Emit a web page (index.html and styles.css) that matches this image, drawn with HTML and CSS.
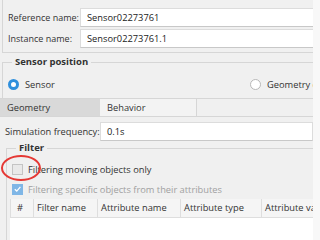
FILE: index.html
```html
<!DOCTYPE html>
<html lang="en">
<head>
  <meta charset="UTF-8" />
  <meta name="viewport" content="width=device-width, initial-scale=1.0" />
  <title>Sensor properties</title>
  <link rel="stylesheet" href="styles.css">
</head>
<body>
<div class="view">
  <div class="content">
    <!-- NAMING -->
    <fieldset class="group naming">
      <legend>Naming</legend>
      <div class="row"><label>Reference name:</label><div class="input">Sensor02273761</div></div>
      <div class="row"><label>Instance name:</label><div class="input">Sensor02273761.1</div></div>
    </fieldset>

    <!-- SENSOR POSITION -->
    <fieldset class="group position">
      <legend>Sensor position</legend>
      <div class="radios">
        <div class="ritem first"><span class="radio on"></span><span class="rlabel">Sensor</span></div>
        <div class="ritem"><span class="radio"></span><span class="rlabel">Geometry center</span></div>
      </div>
    </fieldset>

    <div class="tabs">
      <div class="tab active">Geometry</div>
      <div class="tab">Behavior</div>
    </div>

    <div class="row freq"><label>Simulation frequency:</label><div class="input">0.1s</div></div>

    <!-- FILTER -->
    <fieldset class="group filter">
      <legend>Filter</legend>
      <div class="check"><span class="box"></span>Filtering moving objects only</div>
      <div class="check disabled"><span class="box checked">
        <svg width="10" height="10" viewBox="0 0 10 10"><path d="M2 5.2 L4.2 7.3 L8.2 2.6" fill="none" stroke="#fff" stroke-width="1.4"/></svg>
      </span>Filtering specific objects from their attributes</div>
      <table class="grid">
        <tr><th class="c0">#</th><th class="c1">Filter name</th><th class="c2">Attribute name</th><th class="c3">Attribute type</th><th class="c4">Attribute value</th></tr>
        <tr class="empty"><td></td><td></td><td></td><td></td><td></td></tr>
      </table>
      <div class="mark"></div>
    </fieldset>
  </div>
  <div class="scrollbar"></div>
</div>
</body>
</html>
```

FILE: styles.css
```css
*{box-sizing:border-box}
body{margin:0;background:#f0f0f0;font-family:"Open Sans","Noto Sans",sans-serif;font-size:9.3px;color:#333}
.view{display:flex;width:320px;height:240px;overflow:hidden}
.content{width:313px;flex:none;overflow:hidden;position:relative;white-space:nowrap}
.scrollbar{flex:1;background:#f8f8f8}

.group{margin:0 -40px 0 2px;padding:0 0 0 5px;border:1px solid #d6d6d6;min-width:0}
.group legend{font-weight:bold;line-height:12px;padding:0 3px;margin-left:4px;color:#333;font-size:9.5px}

.naming{margin-top:-11px;padding-top:7px;padding-bottom:4px}
.naming label{font-size:9px}
.row{display:flex;align-items:center;margin-bottom:2px}
.row:last-child{margin-bottom:0}
.row label{width:72px;flex:none}
.input{flex:1;height:19px;line-height:17px;background:#fff;border:1px solid #dcdcdc;border-bottom-color:#c8c8c8;padding:0 6px;color:#222}

.position{margin-top:3px;padding-top:9px;padding-bottom:7px;border-bottom:none}
.radios{display:flex;align-items:center;height:14px}
.ritem{display:flex;align-items:center}
.ritem.first{width:242px}
.radio{width:11px;height:11px;border-radius:50%;border:1px solid #b8b8b8;background:#fff;flex:none}
.radio.on{border:3px solid #2f8fdc}
.rlabel{margin-left:6px}

.tabs{display:flex;height:19px;border-top:1px solid #d6d6d6;border-bottom:1px solid #d6d6d6}
.tab{width:97px;padding:0 7px;line-height:17px;border-right:1px solid #d6d6d6;background:#f3f3f3}
.tab.active{width:100px;background:#d9d9d9;border-right:none}

.freq{margin:5px 0 0 5px}
.freq label{width:95px}

.filter{margin:1px -40px 0 6px;padding:5px 0 0 5px;position:relative;border-bottom:none}
.check{display:flex;align-items:center;height:20px}
.check .box{width:11px;height:11px;border:1px solid #c4c4c4;background:#e9e9e9;margin-right:5px;display:flex;align-items:center;justify-content:center}
.check .box.checked{background:#7fb6e6;border-color:#7fb6e6}
.check.disabled{color:#a0a0a0;height:18px;margin-top:1px}

.grid{border-collapse:collapse;margin:1px 0 0 -2px;background:#fff;table-layout:fixed;width:360px}
.grid th{height:18px;font-weight:normal;text-align:left;padding:0 3px;background:#f5f5f5;border-left:1px solid #dedede;border-bottom:1px solid #dedede;overflow:hidden}
.grid th.c0{padding-left:6px}
.grid .c0{width:23px}
.grid .c1{width:64px}
.grid .c2{width:83px}
.grid .c3{width:81px}
.grid .c4{width:109px}
.grid td{height:40px;border-left:1px solid #fff}

.mark{position:absolute;left:-6px;top:1px;width:40px;height:26px;border:2px solid #e53935;border-radius:50%}
```
